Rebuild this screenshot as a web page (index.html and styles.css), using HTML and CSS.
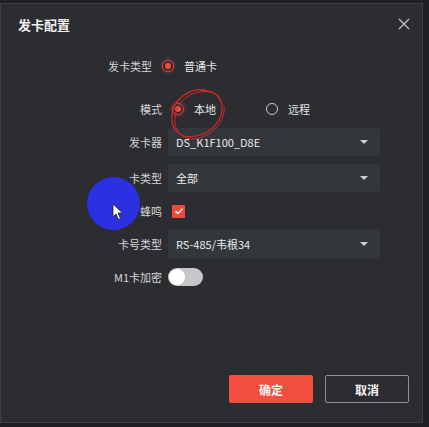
FILE: index.html
```html
<!DOCTYPE html>
<html lang="zh-CN">
<head>
  <meta charset="UTF-8" />
  <meta name="viewport" content="width=device-width, initial-scale=1.0"/>
  <title>发卡配置</title>
  <link rel="stylesheet" href="styles.css">
</head>
<body>

  <div class="dialog">
    <div class="dialog-header">
      <div class="dialog-title">发卡配置</div>
      <svg class="close" width="12" height="12" viewBox="0 0 12 12">
        <path d="M1 1L11 11M11 1L1 11" stroke="#bfc0c2" stroke-width="1.3" fill="none"/>
      </svg>
    </div>

    <div class="form">
      <div class="row row-radio row-shift">
        <div class="label">发卡类型</div>
        <div class="radio-group">
          <label class="radio checked"><span class="dot"></span>普通卡</label>
        </div>
      </div>

      <div class="row row-radio row-mode">
        <div class="label">模式</div>
        <div class="radio-group">
          <label class="radio checked"><span class="dot"></span>本地</label>
          <label class="radio"><span class="dot"></span>远程</label>
        </div>
      </div>

      <div class="row row-select">
        <div class="label">发卡器</div>
        <div class="select">DS_K1F100_D8E<span class="caret"></span></div>
      </div>

      <div class="row row-select">
        <div class="label">卡类型</div>
        <div class="select">全部<span class="caret"></span></div>
      </div>

      <div class="row row-check">
        <div class="label">蜂鸣</div>
        <div class="checkbox">
          <svg width="12" height="12" viewBox="0 0 12 12">
            <path d="M2.5 6.2L5 8.6L9.6 3.6" stroke="#fff" stroke-width="1.4" fill="none"/>
          </svg>
        </div>
      </div>

      <div class="row row-select">
        <div class="label">卡号类型</div>
        <div class="select">RS-485/韦根34<span class="caret"></span></div>
      </div>

      <div class="row row-toggle">
        <div class="label">M1卡加密</div>
        <div class="toggle"><span class="knob"></span></div>
      </div>
    </div>

    <div class="dialog-footer">
      <button class="btn btn-primary">确定</button>
      <button class="btn btn-default">取消</button>
    </div>
  </div>

  <!-- screen recording overlays -->
  <svg class="scribble" width="70" height="60" viewBox="0 0 70 60">
    <path d="M40 3C25 1 8 10 6 28C4 44 16 52 30 49C46 46 58 32 56 18C54 7 44 2 34 4"
          stroke="#d8262b" stroke-width="1.2" fill="none"/>
    <path d="M44 5C28 2 11 12 9 30C7 45 19 55 33 51C48 47 60 33 58 19"
          stroke="#d8262b" stroke-width="1" fill="none"/>
  </svg>
  <div class="pointer-spot"></div>
  <svg class="cursor" width="12" height="18" viewBox="0 0 12 18">
    <path d="M1 1L1 14L4 11L6.5 16.5L8.5 15.5L6 10L10.5 10Z" fill="#fff" stroke="#222" stroke-width="0.8"/>
  </svg>

</body>
</html>
```

FILE: styles.css
```css
body {
  margin: 0;
  width: 429px;
  height: 427px;
  background: #1f2023;
  font-family: "Noto Sans CJK SC", "Noto Sans", sans-serif;
  color: #e6e6e6;
  overflow: hidden;
  position: relative;
}

.dialog {
  margin-top: 3px;
  width: 421px;
  height: 418px;
  background: #2b2d31;
  border: 1px solid #3e4045;
  display: flex;
  flex-direction: column;
}

.dialog-header {
  height: 40px;
  display: flex;
  align-items: center;
  justify-content: space-between;
  padding: 0 12px 0 17px;
}

.dialog-title {
  font-size: 13px;
  font-weight: bold;
  color: #f0f0f0;
}

.form {
  padding-left: 61px;
  display: flex;
  flex-direction: column;
}

.row {
  display: flex;
  align-items: center;
}

.label {
  width: 100px;
  text-align: right;
  font-size: 11px;
  color: #d6d6d6;
  margin-right: 6px;
  white-space: nowrap;
}

.row-radio {
  height: 20px;
}

.row-shift {
  margin-top: 12px;
  margin-left: -10px;
}

.row-mode {
  margin-top: 23px;
}

.radio-group {
  display: flex;
  padding-left: 4px;
  gap: 50px;
}

.radio {
  display: flex;
  align-items: center;
  font-size: 11px;
  color: #e6e6e6;
}

.radio .dot {
  width: 10px;
  height: 10px;
  border: 1px solid #c9c9c9;
  border-radius: 50%;
  margin-right: 10px;
  box-sizing: content-box;
  position: relative;
}

.radio.checked .dot {
  border-color: #e8403a;
  box-shadow: 0 0 4px rgba(232, 64, 58, 0.6);
}

.radio.checked .dot::after {
  content: "";
  position: absolute;
  left: 2px;
  top: 2px;
  width: 6px;
  height: 6px;
  border-radius: 50%;
  background: #f04a42;
}

.row-select {
  margin-top: 9px;
}

.row-select + .row-select {
  margin-top: 8px;
}

.select {
  width: 212px;
  height: 28px;
  box-sizing: border-box;
  background: #33363b;
  border-radius: 2px;
  padding: 0 12px 0 8px;
  display: flex;
  align-items: center;
  justify-content: space-between;
  font-size: 11px;
  color: #ececec;
}

.caret {
  width: 0;
  height: 0;
  border-left: 4px solid transparent;
  border-right: 4px solid transparent;
  border-top: 4px solid #d0d0d0;
}

.row-check {
  height: 20px;
  margin-top: 9px;
}

.checkbox {
  width: 13px;
  height: 13px;
  margin-left: 4px;
  background: #ef4a3e;
  border-radius: 1px;
  display: flex;
  align-items: center;
  justify-content: center;
}

.row-toggle {
  margin-top: 10px;
  height: 18px;
}

.toggle {
  width: 35px;
  height: 18px;
  border-radius: 9px;
  background: #c6c7c9;
  position: relative;
}

.toggle .knob {
  position: absolute;
  left: 1px;
  top: 1px;
  width: 16px;
  height: 16px;
  border-radius: 50%;
  background: #fff;
}

.dialog-footer {
  margin-top: auto;
  display: flex;
  justify-content: flex-end;
  gap: 12px;
  padding: 0 13px 19px 0;
}

.btn {
  width: 84px;
  height: 28px;
  font-family: inherit;
  font-size: 12px;
  font-weight: bold;
  color: #f4f4f4;
  border-radius: 2px;
  cursor: pointer;
}

.btn-primary {
  background: #f24e40;
  border: none;
}

.btn-default {
  background: #2b2d31;
  border: 1px solid #8e9094;
}

.scribble {
  position: absolute;
  left: 166px;
  top: 87px;
}

.pointer-spot {
  position: absolute;
  left: 87px;
  top: 177px;
  width: 53px;
  height: 53px;
  border-radius: 50%;
  background: #2b30e0;
}

.cursor {
  position: absolute;
  left: 112px;
  top: 203px;
}
```
